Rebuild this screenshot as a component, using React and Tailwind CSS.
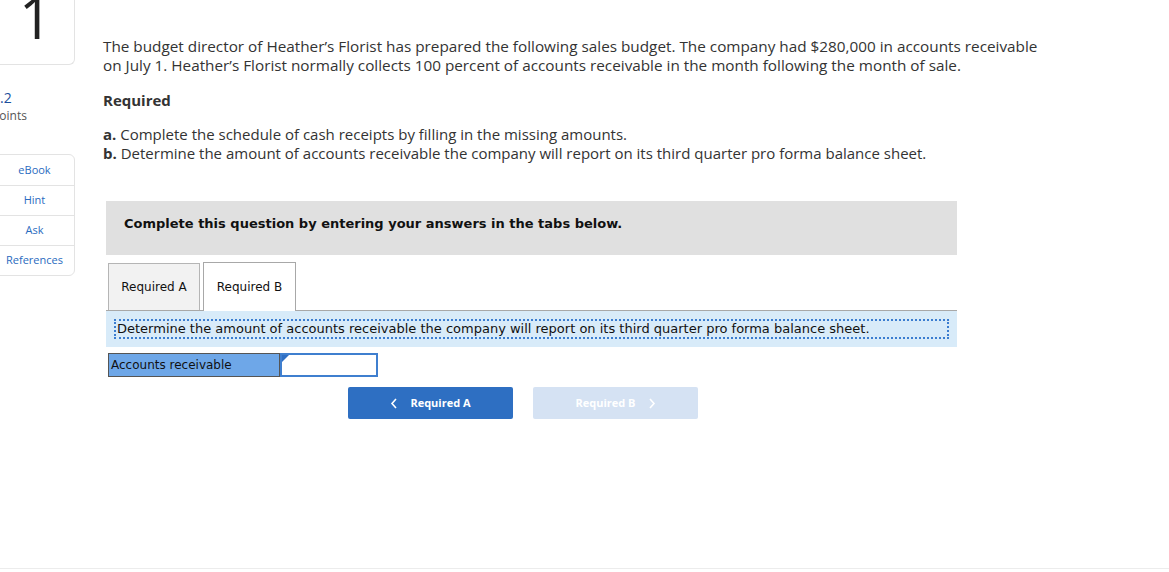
export default function App() {
  const sans = { fontFamily: '"Open Sans", "Liberation Sans", sans-serif' };
  const verdana = { fontFamily: '"DejaVu Sans", Verdana, sans-serif' };

  return (
    <div className="relative h-[572px] w-[1169px] overflow-hidden bg-white text-[#333]" style={sans}>
      <div className="flex">
        {/* left rail */}
        <aside className="w-[75px] shrink-0">
          <div className="ml-[-10px] flex h-[65px] w-[85px] items-end justify-center rounded-br-md border border-t-0 border-[#e3e3e3] pb-[18px] pl-[6px]">
            <span className="text-[58px] leading-none text-[#222]">1</span>
          </div>
          <div className="mt-[24px] ml-[-8px]">
            <div className="text-[14px] leading-[18px] text-[#1c4f9c]">1.2</div>
            <div className="text-[12px] leading-[18px] text-[#555]">points</div>
          </div>
          <div className="mt-[29px] ml-[-10px] w-[85px] rounded-r-md border border-[#e3e3e3] text-[11px] text-[#2a6bc0]">
            <div className="flex h-[30px] items-center justify-center pl-[4px]">eBook</div>
            <div className="flex h-[30px] items-center justify-center border-t border-[#e3e3e3] pl-[4px]">Hint</div>
            <div className="flex h-[30px] items-center justify-center border-t border-[#e3e3e3] pl-[4px]">Ask</div>
            <div className="flex h-[30px] items-center justify-center border-t border-[#e3e3e3] pl-[4px]">References</div>
          </div>
        </aside>

        {/* main */}
        <main className="w-[1000px] pl-[28px] pt-[37px]">
          <p className="w-[940px] text-[15.3px] leading-[19px] text-[#333]">
            The budget director of Heather’s Florist has prepared the following sales budget. The company had $280,000 in accounts receivable on July 1. Heather’s Florist normally collects 100 percent of accounts receivable in the month following the month of sale.
          </p>
          <h2 className="mt-[16px] text-[15px] font-bold leading-[19px] text-[#333]">Required</h2>
          <div className="mt-[15px] text-[15px] leading-[19px] text-[#333]">
            <div><span className="font-bold">a.</span> Complete the schedule of cash receipts by filling in the missing amounts.</div>
            <div><span className="font-bold">b.</span> Determine the amount of accounts receivable the company will report on its third quarter pro forma balance sheet.</div>
          </div>

          <div className="mt-[38px] ml-[3px] w-[851px]" style={verdana}>
            <div className="flex h-[54px] items-center bg-[#e0e0e0] pb-[8px] pl-[18px] text-[13px] font-bold text-[#111]">
              Complete this question by entering your answers in the tabs below.
            </div>

            <div className="mt-[7px] flex items-end gap-[3px] pl-[2px] text-[12px] text-[#111]">
              <div className="flex h-[47px] w-[92px] items-center justify-center border border-b-0 border-[#b5b5b5] bg-[#f2f2f2]">
                Required A
              </div>
              <div className="relative -mb-px flex h-[49px] w-[93px] items-center justify-center border border-b-0 border-[#a8a8a8] bg-white">
                Required B
              </div>
            </div>
            <div className="border-t border-[#a8a8a8] bg-[#d8ebf9] px-[8px] py-[8px]">
              <div className="border-2 border-dotted border-[#3b7dd0] px-[1px] text-[13px] leading-[16px] text-[#111]">
                Determine the amount of accounts receivable the company will report on its third quarter pro forma balance sheet.
              </div>
            </div>

            <div className="mt-[6px] ml-[2px] flex h-[24px] text-[12px] text-[#111]">
              <div className="flex w-[172px] items-center border border-[#555] bg-[#6ea7e8] pl-[2px]">Accounts receivable</div>
              <div className="relative w-[98px] border-2 border-[#3f7fcf] bg-white">
                <span className="absolute left-0 top-0 h-0 w-0 border-r-[7px] border-t-[7px] border-r-transparent border-t-[#2f6fc4]" />
              </div>
            </div>

            <div className="mt-[10px] flex gap-[20px] pl-[242px]" style={sans}>
              <button className="flex h-[32px] w-[165px] items-center justify-center gap-[12px] rounded-[2px] bg-[#2e6fc2] text-[11px] font-bold text-white">
                <svg width="8" height="11" viewBox="0 0 8 11" fill="none" stroke="white" strokeWidth="1.6"><path d="M6 1 L2 5.5 L6 10" /></svg>
                Required A
              </button>
              <button className="flex h-[32px] w-[165px] items-center justify-center gap-[12px] rounded-[2px] bg-[#d5e2f3] text-[11px] font-bold text-white">
                Required B
                <svg width="8" height="11" viewBox="0 0 8 11" fill="none" stroke="white" strokeWidth="1.6"><path d="M2 1 L6 5.5 L2 10" /></svg>
              </button>
            </div>
          </div>
        </main>
      </div>
      <div className="absolute bottom-[3px] left-0 h-px w-full bg-[#ececec]" />
    </div>
  );
}
